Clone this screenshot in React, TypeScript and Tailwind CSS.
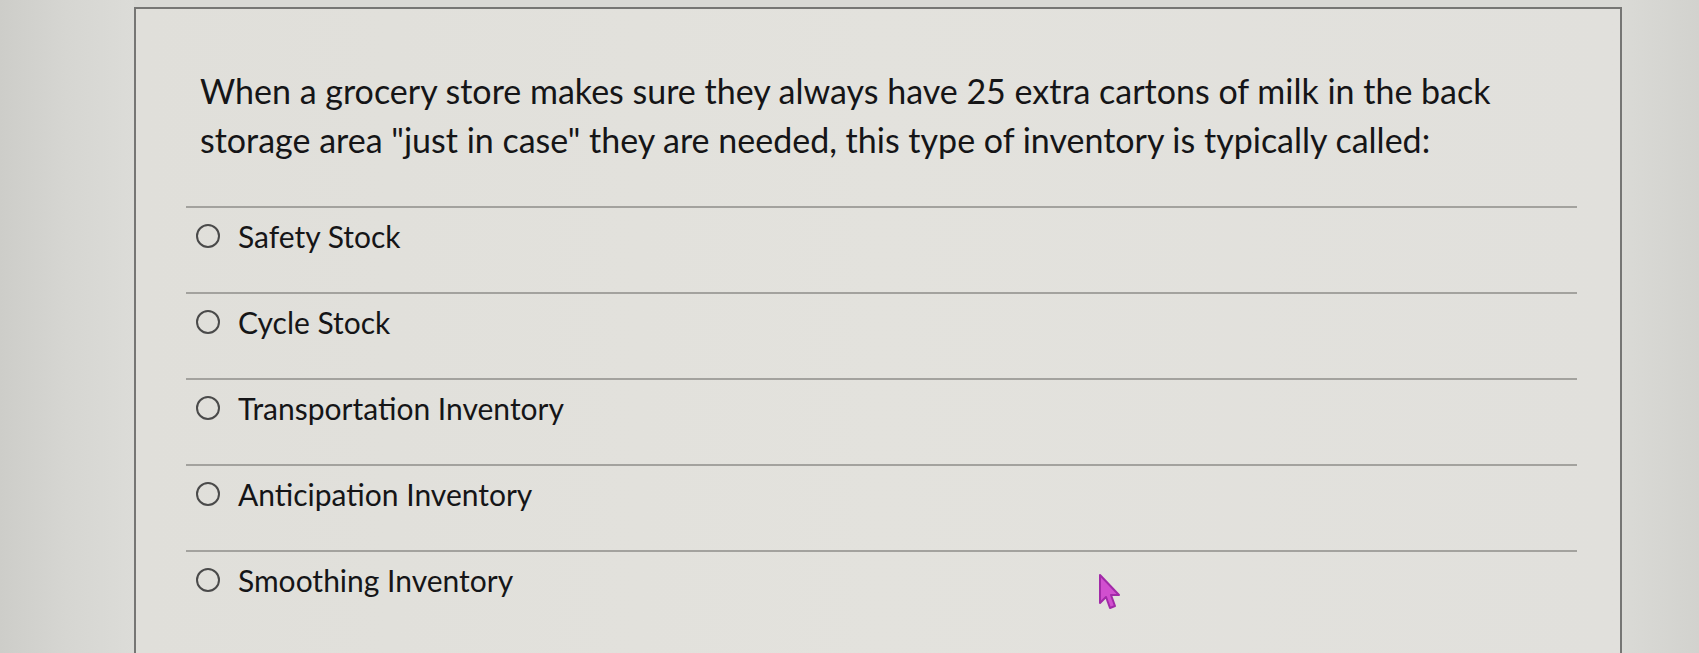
import React from "react";

const options = [
  "Safety Stock",
  "Cycle Stock",
  "Transportation Inventory",
  "Anticipation Inventory",
  "Smoothing Inventory",
];

export default function App() {
  return (
    <div
      className="w-[1699px] h-[653px] flex bg-[#d9d9d5] overflow-hidden text-[#151517]"
      style={{ fontFamily: "Lato, 'Open Sans', sans-serif" }}
    >
      <div className="w-[134px] shrink-0 bg-gradient-to-r from-[#cdcdc9] via-[#d6d6d2] to-[#dcdcd8]" />
      <div className="relative w-[1488px] shrink-0 mt-[7px] border-l-2 border-t-2 border-r-2 border-[#767674] bg-gradient-to-r from-[#e0dfda] via-[#e3e2dd] to-[#e1e0dc]">
        <div className="pl-[64px] pt-[57px] pr-[40px]">
          <p className="text-[34px] leading-[49px] whitespace-nowrap">
            When a grocery store makes sure they always have 25 extra cartons of milk in the back
            <br />
            storage area "just in case" they are needed, this type of inventory is typically called:
          </p>
        </div>
        <div className="ml-[50px] w-[1391px] mt-[42px]">
          {options.map((o) => (
            <div
              key={o}
              className="h-[86px] border-t-2 border-[#a3a29e] flex items-start pt-[10px]"
            >
              <div className="flex items-center h-[36px] ml-[10px]">
                <span className="w-[24px] h-[24px] rounded-full border-2 border-[#4a4a4a]" />
                <span className="ml-[18px] text-[30px] leading-[36px]">{o}</span>
              </div>
            </div>
          ))}
        </div>
        <svg
          className="absolute left-[962px] top-[564px]"
          width="24"
          height="38"
          viewBox="0 0 24 38"
        >
          <path
            d="M2 2 L2 30 L8 24 L12 35 L17 33 L13 22 L21 22 Z"
            fill="#d14fcf"
            stroke="#a22aa8"
            strokeWidth="2"
            strokeLinejoin="round"
          />
        </svg>
      </div>
      <div className="flex-1 bg-gradient-to-r from-[#dadad6] to-[#d2d2ce]" />
    </div>
  );
}
